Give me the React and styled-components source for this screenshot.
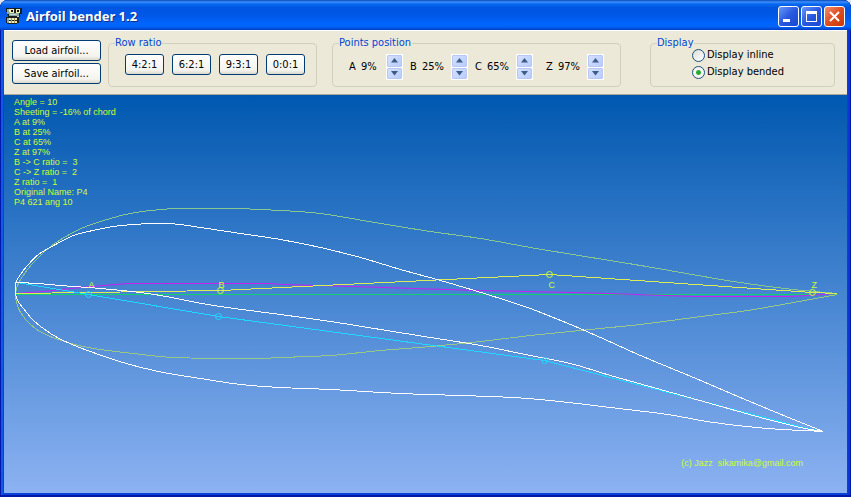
import styled from "styled-components";
import { createGlobalStyle } from "styled-components";
import React from "react";


const Global = createGlobalStyle`
*{
  box-sizing: border-box;
}
body{
  margin: 0;
  background: #e4e8f0;
  font-family: 'DejaVu Sans Condensed', 'DejaVu Sans', sans-serif;
  font-size: 11px;
  line-height: 14px;
  color: #000000;
}
button{
  font: inherit;
  color: inherit;
  padding: 0;
}
`

const Frame = styled.div`
display: flex;
flex-direction: column;
min-height: 100vh;
padding: 0 4px 4px;
border-radius: 8px 8px 0 0;
background: #0a42d8;
box-shadow: inset 1px 0 #0019a8, inset -1px 0 #0019a8, inset 0 -2px #0019a8, inset 3px 0 #1058e8, inset -3px 0 #0838d0;
overflow: hidden;
`

const TitleBar = styled.header`
display: flex;
align-items: center;
height: 30px;
margin: 0 -4px;
padding: 2px 6px 0 6px;
gap: 2px;
border-radius: 7px 7px 0 0;
background: linear-gradient(#0848b8 0, #3c90fc 2px, #0868f0 4px, #0054e0 8px, #0058e8 16px, #0066ff 24px, #0062f4 27px, #003cc0 30px);
`

const Title = styled.h1`
flex: 1;
margin: 0;
font-family: 'Noto Sans', sans-serif;
font-size: 13px;
font-weight: 700;
line-height: 20px;
color: #ffffff;
text-shadow: 1px 1px #10308c;
`

const WindowButton = styled.button`
display: flex;
width: 21px;
height: 21px;
border: 1px solid #ffffff;
border-radius: 3px;
background: ${props => props.$close ? 'linear-gradient(135deg, #f09070, #e04c20 50%, #c83808)' : 'linear-gradient(135deg, #6898f8, #2858e0 50%, #1848d0)'};
`

const Toolbar = styled.div`
display: grid;
grid-template-columns: 89px 216fr 304fr 214fr;
align-items: start;
padding: 5px 12px 7px 8px;
background: #ece9d8;
border-top: 1px solid #ffffff;
border-bottom: 1px solid #aca899;
`

const FileButtons = styled.div`
display: grid;
gap: 2px;
padding-top: 4px;
`

const PushButton = styled.button`
height: 21px;
width: ${props => props.$small ? '39px' : '100%'};
border: 1px solid #003c74;
border-radius: 3px;
background: linear-gradient(#ffffff, #f4f3ee 80%, #dcd8cc);
line-height: 20px;
`

const Group = styled.fieldset`
min-width: 0;
height: 51px;
margin: 0 0 0 ${props => props.$space};
padding: 0 6px;
border: 1px solid #d0d0bf;
border-radius: 4px;
`

const Legend = styled.legend`
padding: 0 1px 0 0;
height: 14px;
color: #0046d5;
`

const Row = styled.div`
display: flex;
gap: ${props => props.$gap};
padding: 4px 0 0 10px;
`

const Point = styled.div`
display: grid;
grid-template-columns: 12px ${props => props.$wide ? '29px' : '25px'} 17px;
height: 26px;
align-items: center;
&:last-child{
  margin-left: 6px;
}
`

const Spinner = styled.span`
display: grid;
height: 26px;
border: 1px solid #ffffff;
background: #ffffff;
gap: 1px;
`

const SpinButton = styled.button`
display: flex;
align-items: center;
justify-content: center;
border: 1px solid #b8c8f4;
border-radius: 1px;
background: linear-gradient(135deg, #d4e0fe, #b8ccfa);
`

const Options = styled.div`
display: grid;
gap: 3px;
margin-top: -2px;
padding-left: 35px;
`

const Option = styled.label`
display: flex;
align-items: center;
height: 14px;
gap: 2px;
white-space: nowrap;
`

const Radio = styled.input`
appearance: none;
width: 13px;
height: 13px;
margin: 0;
border: 1px solid #1c5180;
border-radius: 50%;
background: linear-gradient(135deg, #dcdcd7, #ffffff);
&:checked{
  background: radial-gradient(circle, #21a121 0, #38b038 2px, #f4f4f0 3px);
}
`

const Canvas = styled.main`
display: grid;
flex: 1;
background: linear-gradient(#0058b0, #8cb2f2);
font-family: 'Liberation Sans', sans-serif;
font-size: 9px;
line-height: 10px;
color: #ccff33;
& > *{
  grid-area: 1 / 1;
}
`

const Plot = styled.svg`
display: block;
width: 100%;
height: auto;
`

const Info = styled.pre`
margin: 0;
padding: 2px 10px;
font: inherit;
`

const Copyright = styled.p`
align-self: end;
justify-self: end;
margin: 0;
padding: 0 44px 25px 0;
white-space: pre;
`

const Curve = styled.path`
fill: none;
stroke: ${props => props.$color};
shape-rendering: ${props => props.$soft ? 'auto' : 'crispEdges'};
`

const Handle = styled.circle`
fill: none;
stroke: ${props => props.$color};
`

const Mark = styled.text`
fill: #ccff33;
`

//data;
const ratios = ['4:2:1', '6:2:1', '9:3:1', '0:0:1'];
const names = ['A', 'B', 'C', 'Z'];

const chord = '15,294 837,294';
const camber = '15,293 43,291 80,287 127,283 160,283 270,283 280,284 353,286 413,288 480,290 570,292 607,293 693,296 790,296 837,293';

const straight = [
  ['#dcec58', '15,293 88,292 220,290 549,274 812,292 837,293'],
  ['#20d8ff', '16,282 88,294 218,316 544,360 807,428 823,431'],
];

const flat = [
  ['#88c890', '15,293 17,285 22,276 33,262 50,246 67,235 83,227 100,221 125,214 150,210 177,208 233,208 280,210 320,213 380,223 430,231 480,238 530,247 560,252 640,265 733,281 793,289 837,293'],
  ['#98c888', '15,293 16,302 20,312 30,324 43,333 67,342 93,348 133,353 173,357 257,358 280,357 330,355 380,350 430,346 480,341 530,335 570,331 610,327 640,324 693,317 747,310 793,302 837,294'],
];

const bended = [
  ['#ffffff', '15,293 15,283 20,274 27,265 38,254 55,244 73,235 97,229 113,226 133,224 152,223 165,223 180,224 200,227 240,233 280,239 320,247 360,257 400,269 440,280 487,294 527,307 570,324 600,337 640,355 693,377 747,400 793,419 823,431'],
  ['#ffffff', '15,293 17,300 23,308 33,320 50,333 67,342 87,350 113,359 133,365 163,372 200,378 240,384 280,387 330,389 400,393 460,395 513,397 550,400 610,407 667,414 713,422 767,428 823,431'],
  ['#ffffff', '16,282 37,283 60,285 100,288 140,292 160,295 213,305 280,314 330,321 380,329 430,337 480,345 530,355 570,363 610,375 660,389 710,403 760,417 800,427 823,431'],
];

const handles = [
  ['#ccff33', 220, 290], ['#ccff33', 549, 274], ['#ccff33', 812, 292],
  ['#20d8ff', 88, 294], ['#20d8ff', 218, 316], ['#20d8ff', 544, 360],
];

const marks = [['A', 88], ['B', 218], ['C', 548], ['Z', 811]];

function linePath(line) {
  return 'M' + line.split(' ').join('L')
}

//spline through all points;
function smoothPath(line) {
  const p = line.split(' ').map(pair => pair.split(',').map(Number));
  let d = `M${p[0]}`;
  for (let i = 0; i < p.length - 1; i++) {
    const a = p[i - 1] || p[i];
    const b = p[i];
    const c = p[i + 1];
    const e = p[i + 2] || c;
    //handle length follows the segment, so long segments don't overshoot short ones;
    const len = Math.hypot(c[0] - b[0], c[1] - b[1]) / 3;
    const m1 = Math.hypot(c[0] - a[0], c[1] - a[1]);
    const m2 = Math.hypot(e[0] - b[0], e[1] - b[1]);
    d += `C${b[0] + (c[0] - a[0]) / m1 * len},${b[1] + (c[1] - a[1]) / m1 * len}`
    d += ` ${c[0] - (e[0] - b[0]) / m2 * len},${c[1] - (e[1] - b[1]) / m2 * len} ${c}`
  }
  return d
}

function Logo() {
  return (
    <svg width="18" height="18" viewBox="0 0 18 18" shapeRendering="crispEdges" aria-hidden="true">
      <path d="M0 1h16v6h-2v3h-1v6h-2v1H1v-1H0v-6h2V8H1z" fill="#182020" />
      <path d="M1 2h3v4h9v3H3V7H1zM1 11h2v5H1z" fill="#88a8a0" />
      <path d="M3 2h5v4H4V5H3zM10 2h4v4h-4z" fill="#f4f0b0" />
      <path d="M5 3h2v2H5zM11 3h2v2h-2z" fill="#101810" />
      <path d="M3 11h8v2H3zM3 14h8v2H3z" fill="#f0ecb8" />
      <path d="M5 11h1v5H5zM8 11h1v5H8z" fill="#a09868" />
      <path d="M11 9h2v1h-2zM4 7h7v1H4z" fill="#c0d8d0" />
    </svg>
  )
}

function Arrow({ down }) {
  return (
    <svg width="7" height="5" viewBox="0 0 7 5" aria-hidden="true">
      <path d={down ? 'M0 0h7L3.500 4.500z' : 'M0 4.500h7L3.500 0z'} fill="#3c5c88" />
    </svg>
  )
}

function App() {
  const [ratio, setRatio] = React.useState('6:2:1');
  const [points, setPoints] = React.useState({ A: 9, B: 25, C: 65, Z: 97 });
  const [display, setDisplay] = React.useState('bended');

  function move(name, step){
    setPoints(prev => ({ ...prev, [name]: Math.min(100, Math.max(0, prev[name] + step)) }))
  }

  const info = [
    'Angle = 10',
    'Sheeting = -16% of chord',
    ...names.map(name => `${name} at ${points[name]}%`),
    'B -> C ratio =  3',
    'C -> Z ratio =  2',
    'Z ratio =  1',
    'Original Name: P4',
    `P4 ${ratio.replaceAll(':', '')} ang 10`,
  ];

  return (
    <div>
      <Global></Global>
      <Frame>
        <TitleBar>
          <Logo />
          <Title>Airfoil bender 1.2</Title>
          <WindowButton aria-label="Minimize">
            <svg width="19" height="19"><path d="M4 12h7v3H4z" fill="#fff" /></svg>
          </WindowButton>
          <WindowButton aria-label="Maximize">
            <svg width="19" height="19"><path d="M4 4h11v11H4zM5 7v7h9V7z" fill="#fff" fillRule="evenodd" /></svg>
          </WindowButton>
          <WindowButton $close aria-label="Close">
            <svg width="19" height="19"><path d="M5 5l9 9M14 5l-9 9" stroke="#fff" strokeWidth="2" /></svg>
          </WindowButton>
        </TitleBar>
        <Toolbar>
          <FileButtons>
            <PushButton>Load airfoil...</PushButton>
            <PushButton>Save airfoil...</PushButton>
          </FileButtons>
          <Group $space="7px">
            <Legend>Row ratio</Legend>
            <Row $gap="8px">
              {ratios.map(r => (
                <PushButton $small key={r} onClick={() => setRatio(r)}>{r}</PushButton>
              ))}
            </Row>
          </Group>
          <Group $space="15px">
            <Legend>Points position</Legend>
            <Row $gap="7px">
              {names.map(name => (
                <Point key={name} $wide={name !== 'A'}>
                  <label htmlFor={name}>{name}</label>
                  <output id={name}>{points[name]}%</output>
                  <Spinner>
                    <SpinButton aria-label={`${name} up`} onClick={() => move(name, 1)}><Arrow /></SpinButton>
                    <SpinButton aria-label={`${name} down`} onClick={() => move(name, -1)}><Arrow down /></SpinButton>
                  </Spinner>
                </Point>
              ))}
            </Row>
          </Group>
          <Group $space="29px">
            <Legend>Display</Legend>
            <Options>
              {['inline', 'bended'].map(mode => (
                <Option key={mode}>
                  <Radio type="radio" name="display" checked={display === mode} onChange={() => setDisplay(mode)} />
                  Display {mode}
                </Option>
              ))}
            </Options>
          </Group>
        </Toolbar>
        <Canvas>
          <Plot viewBox="3.5 94.5 843 398" role="img" aria-label="Airfoil">
            <Curve $color="#10d070" d={linePath(chord)} />
            <Curve $soft $color="#c820f4" d={linePath(camber)} />
            {flat.map(([color, line]) => <Curve key={line} $color={color} d={smoothPath(line)} />)}
            {straight.map(([color, line]) => <Curve key={line} $color={color} d={linePath(line)} />)}
            {bended.map(([color, line]) => <Curve key={line} $color={color} d={smoothPath(line)} />)}
            {handles.map(([color, x, y]) => <Handle key={`${x}-${y}`} $color={color} cx={x} cy={y} r="3" />)}
            {marks.map(([name, x]) => <Mark key={name} x={x} y="287">{name}</Mark>)}
          </Plot>
          <Info>{info.join('\n')}</Info>
          <Copyright>(c) Jazz  sikamika@gmail.com</Copyright>
        </Canvas>
      </Frame>
    </div>
  );
}

export default App;
